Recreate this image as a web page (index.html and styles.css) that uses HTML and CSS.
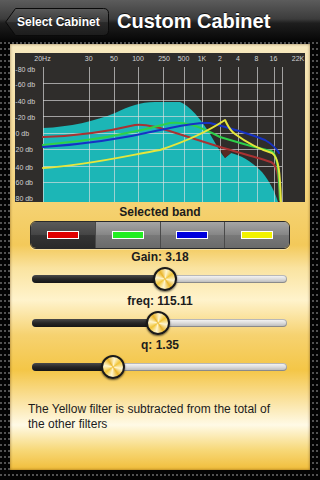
FILE: index.html
```html
<!DOCTYPE html>
<html>
<head>
<meta charset="utf-8">
<link rel="stylesheet" href="styles.css">
</head>
<body>
<header class="nav">
  <div class="back">
    <svg class="back-shape" width="104" height="28" viewBox="0 0 104 28">
      <defs>
        <linearGradient id="bg" x1="0" y1="0" x2="0" y2="1">
          <stop offset="0" stop-color="#5a5a5a"/>
          <stop offset="0.5" stop-color="#3a3a3a"/>
          <stop offset="0.52" stop-color="#2a2a2a"/>
          <stop offset="1" stop-color="#1c1c1c"/>
        </linearGradient>
      </defs>
      <path d="M10.5,0.5 H98.5 Q103.5,0.5 103.5,5.5 V22.5 Q103.5,27.5 98.5,27.5 H10.5 L0.7,14 Z" fill="url(#bg)" stroke="#0a0a0a" stroke-width="1"/>
    </svg>
    <span class="back-label">Select Cabinet</span>
  </div>
  <h1 class="title">Custom Cabinet</h1>
</header>
<main class="frame">
  <section class="panel">
    <svg class="graph" width="290" height="149" viewBox="15 53 290 149">
      <rect x="15" y="53" width="290" height="149" fill="#2f2d2b"/>
      <path d="M43,202 L43,128 C70,127 95,121 115,113 C130,106 140,102 155,102 L180,102 C190,106 200,118 210,134 C216,144 220,152 225,158 L231,153 C240,155 250,160 262,172 C270,182 275,192 278,202 Z" fill="#1cb6b6"/>
      <path d="M221,150 L225,158 L231,153 L228,148 Z" fill="#5a2a22"/>
      <g stroke="#e0e0e0" stroke-opacity="0.65" stroke-width="1" fill="none">
        <path d="M43.5,67V202 M89.5,67V202 M114.5,67V202 M138.5,67V202 M163.5,67V202 M184.5,67V202 M202.5,67V202 M220.5,67V202 M238.5,67V202 M257.5,67V202 M274.5,67V202 M282.5,67V202"/>
        <path d="M43,83.5H282 M43,100.5H282 M43,116.5H282 M43,133.5H282 M43,149.5H282 M43,166.5H282 M43,182.5H282"/>
      </g>
      <g fill="none" stroke-width="2" stroke-linecap="round" stroke-linejoin="round">
        <path stroke="#a83232" d="M43,137 C80,136 110,131 135,125 C145,124 150,126 160,128 L220,147 C240,153 260,158 271,162 C278,165 279,180 280,202"/>
        <path stroke="#2ed04a" d="M43,145 C90,141 130,134 170,123 C185,122 195,124 220,137 C240,143 260,149 271,151 C278,153 279,175 280,200"/>
        <path stroke="#1632c4" d="M43,147 C90,144 130,137 160,130 C180,126 195,122 210,123 C230,128 250,134 265,140 C272,144 276,148 279,153"/>
        <path stroke="#e6e63c" d="M43,168 C90,165 130,155 160,150 C190,140 210,130 225,120 C228,126 230,131 235,134 C250,145 262,150 272,153 C279,157 280,175 281,202"/>
      </g>
      <g font-family="'Liberation Sans', Arial, sans-serif" font-size="7" fill="#d4d4d4" text-anchor="middle">
        <text x="42.5" y="60.5">20Hz</text>
        <text x="88.7" y="60.5">30</text>
        <text x="114" y="60.5">50</text>
        <text x="138" y="60.5">100</text>
        <text x="164" y="60.5">250</text>
        <text x="183.5" y="60.5">500</text>
        <text x="202" y="60.5">1K</text>
        <text x="220" y="60.5">2</text>
        <text x="238" y="60.5">4</text>
        <text x="256.5" y="60.5">8</text>
        <text x="273.5" y="60.5">16</text>
        <text x="298" y="60.5">22K</text>
      </g>
      <g font-family="'Liberation Sans', Arial, sans-serif" font-size="7" fill="#d4d4d4">
        <text x="15.3" y="71.5">-80 db</text>
        <text x="15.3" y="86.5">-60 db</text>
        <text x="15.3" y="103.5">-40 db</text>
        <text x="15.3" y="119.5">-20 db</text>
        <text x="15.5" y="135.5">0 db</text>
        <text x="15.5" y="151.5">20 db</text>
        <text x="15.5" y="169.5">40 db</text>
        <text x="15.5" y="184.5">60 db</text>
        <text x="15.5" y="201">80 db</text>
      </g>
    </svg>
    <h2 class="band-title">Selected band</h2>
    <div class="segmented">
      <div class="seg selected"><span class="swatch red"></span></div>
      <div class="seg"><span class="swatch green"></span></div>
      <div class="seg"><span class="swatch blue"></span></div>
      <div class="seg"><span class="swatch yellow"></span></div>
    </div>
    <div class="param">
      <div class="param-label">Gain: 3.18</div>
      <div class="slider">
        <div class="track"><div class="fill" style="width:133px"></div></div>
        <div class="thumb" style="left:121px"></div>
      </div>
    </div>
    <div class="param">
      <div class="param-label">freq: 115.11</div>
      <div class="slider">
        <div class="track"><div class="fill" style="width:126px"></div></div>
        <div class="thumb" style="left:114px"></div>
      </div>
    </div>
    <div class="param">
      <div class="param-label">q: 1.35</div>
      <div class="slider">
        <div class="track"><div class="fill" style="width:81px"></div></div>
        <div class="thumb" style="left:69px"></div>
      </div>
    </div>
    <p class="note">The Yellow filter is subtracted from the total of the other filters</p>
  </section>
</main>
</body>
</html>
```
FILE: styles.css
```css
* { box-sizing: border-box; }
html, body {
  margin: 0;
  padding: 0;
  width: 320px;
  height: 480px;
  overflow: hidden;
  background: #000;
  font-family: "Liberation Sans", Arial, sans-serif;
}
.nav {
  height: 42px;
  display: flex;
  align-items: center;
  gap: 8px;
  padding-left: 5px;
  background: linear-gradient(#5c5c5c 0%, #3c3c3c 45%, #1e1e1e 55%, #050505 100%);
}
.back {
  position: relative;
  align-self: flex-start;
  margin-top: 8px;
  width: 104px;
  height: 28px;
  display: flex;
  align-items: center;
  padding-left: 12px;
}
.back-shape {
  position: absolute;
  left: 0;
  top: 0;
}
.back-label {
  position: relative;
  color: #fff;
  font-size: 12px;
  font-weight: bold;
  text-shadow: 0 -1px 0 rgba(0,0,0,.7);
}
.title {
  margin: 0;
  color: #fff;
  font-size: 20px;
  line-height: 24px;
  font-weight: bold;
  text-shadow: 0 -1px 0 rgba(0,0,0,.7);
}
.frame {
  display: block;
  height: 438px;
  padding: 2px 10px 10px;
  background-color: #030303;
  background-image: radial-gradient(circle at 1px 1px, rgba(170,170,170,.55) 0.6px, transparent 1.3px);
  background-size: 4px 6px;
}
.panel {
  height: 426px;
  padding: 9px 5px 0;
  color: #1c1c1c;
  background: linear-gradient(#f7e9c0 0px, #f6dc98 100px, #f5d272 161px, #f3c95a 201px, #fae3a0 224px, #fff3cc 256px, #f6d270 291px, #f4c647 326px, #f9dd90 351px, #fffae6 381px, #f7d878 406px, #f1bd3a 426px);
  box-shadow: inset 0 0 3px rgba(80,45,0,.6);
}
.graph {
  display: block;
}
.band-title {
  margin: 3px 0 0;
  font-size: 12px;
  line-height: 14px;
  font-weight: bold;
  text-align: center;
}
.segmented {
  margin: 2px 15px 0;
  height: 28px;
  display: flex;
  border: 1px solid #2a2a2a;
  border-radius: 6px;
  overflow: hidden;
  box-shadow: 0 1px 0 rgba(255,255,255,.4);
}
.seg {
  flex: 1;
  display: flex;
  align-items: center;
  justify-content: center;
  background: linear-gradient(#a6a6a6, #858585 50%, #787878 52%, #6a6a6a);
  border-left: 1px solid #4a4a4a;
}
.seg:first-child { border-left: 0; }
.seg.selected {
  background: linear-gradient(#5a5a5a, #444 50%, #343434 52%, #2a2a2a);
}
.swatch {
  width: 32px;
  height: 8px;
  border: 1px solid #fff;
}
.red { background: #e00000; }
.green { background: #22ee22; }
.blue { background: #0000dd; }
.yellow { background: #f2f200; }
.param-label {
  margin-top: 1px;
  font-size: 12px;
  line-height: 14px;
  font-weight: bold;
  text-align: center;
}
.param + .param .param-label { margin-top: 0; }
.slider {
  position: relative;
  height: 30px;
  margin: 0 18px 0 17px;
  display: flex;
  align-items: center;
}
.track {
  flex: 1;
  height: 8px;
  border-radius: 4px;
  overflow: hidden;
  background: linear-gradient(#fafafa, #dcdcdc 50%, #b4b4b4);
  box-shadow: inset 0 0 0 1px rgba(0,0,0,.25);
}
.fill {
  height: 100%;
  background: linear-gradient(#4a4a4a, #262626 50%, #151515);
}
.thumb {
  position: absolute;
  top: 3px;
  width: 24px;
  height: 24px;
  border-radius: 50%;
  border: 2px solid #1a1a1a;
  background: conic-gradient(from 10deg, #fff6cf, #f1c53a 45deg, #fff6cf 90deg, #e9b52c 135deg, #fff6cf 180deg, #f1c53a 225deg, #fff6cf 270deg, #e9b52c 315deg, #fff6cf 360deg);
  box-shadow: 0 1px 2px rgba(0,0,0,.6);
}
.note {
  margin: 20px 13px 0;
  width: 252px;
  font-size: 12px;
  line-height: 15px;
}
```
